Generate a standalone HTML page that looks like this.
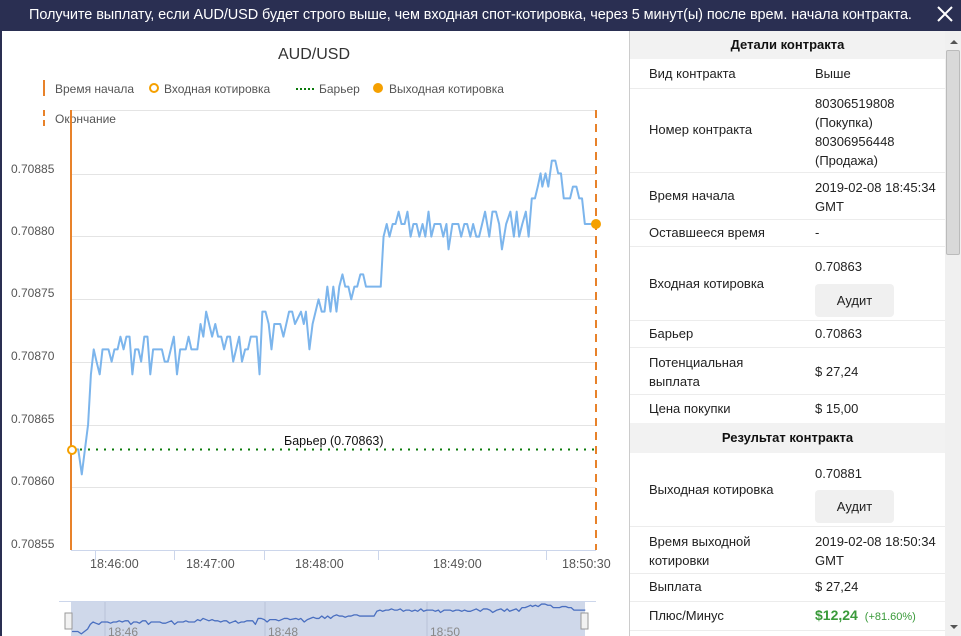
<!DOCTYPE html>
<html><head><meta charset="utf-8"><style>
*{margin:0;padding:0;box-sizing:border-box}
body{width:961px;height:636px;overflow:hidden;background:#fff;font-family:"Liberation Sans","Noto Sans CJK SC",sans-serif;position:relative}
.hdr{position:absolute;left:0;top:0;width:961px;height:31px;background:#2a2f52;color:#fff;font-size:14.5px;line-height:31px;padding-left:29px;letter-spacing:-0.1px}
.x{position:absolute;right:6px;top:4px}
.lb{position:absolute;left:0;top:31px;width:2px;height:605px;background:#2a2f52}
.t{position:absolute;font-size:13px;color:#222;white-space:nowrap}
.rp{position:absolute;left:629px;top:31px;width:316px;height:605px;border-left:1px solid #ccc}
.sep{position:absolute;left:630px;width:315px;height:1px;background:#ececec}
.sh{position:absolute;left:630px;width:315px;background:#f2f2f2;font-weight:bold;font-size:13px;text-align:center;color:#111}
.btn{position:absolute;left:815px;width:79px;height:33px;background:#f0f0f0;border-radius:4px;font-size:13px;text-align:center;line-height:33px;color:#222}
.sb{position:absolute;left:945px;top:31px;width:16px;height:605px;background:#f0f0f0}
.ax{position:absolute;font-size:12px;color:#555}
.lg{position:absolute;font-size:12px;color:#555;white-space:nowrap}
</style></head><body>
<div class="hdr">Получите выплату, если AUD/USD будет строго выше, чем входная спот-котировка, через 5 минут(ы) после врем. начала контракта.</div>
<svg class="x" width="20" height="20" viewBox="0 0 20 20"><path d="M3 3L17 17M17 3L3 17" stroke="#fff" stroke-width="2"/></svg>
<div class="lb"></div>

<div style="position:absolute;left:278px;top:46px;font-size:16px;color:#333">AUD/USD</div>
<div style="position:absolute;left:43px;top:80px;width:2px;height:16px;background:#e8822a"></div>
<div class="lg" style="left:55px;top:82px">Время начала</div>
<div style="position:absolute;left:149px;top:83px;width:10px;height:10px;border:2px solid #f5a000;border-radius:50%"></div>
<div class="lg" style="left:164px;top:82px">Входная котировка</div>
<div style="position:absolute;left:296px;top:88px;width:18px;border-top:2px dotted #0a7a0a"></div>
<div class="lg" style="left:319px;top:82px">Барьер</div>
<div style="position:absolute;left:373px;top:83px;width:10px;height:10px;background:#f5a000;border-radius:50%"></div>
<div class="lg" style="left:389px;top:82px">Выходная котировка</div>
<div style="position:absolute;left:43px;top:110px;height:16px;border-left:2px dashed #e8822a"></div>
<div class="lg" style="left:55px;top:112px">Окончание</div>

<div class="ax" style="left:11px;top:162px">0.70885</div>
<div class="ax" style="left:11px;top:224px">0.70880</div>
<div class="ax" style="left:11px;top:286px">0.70875</div>
<div class="ax" style="left:11px;top:349px">0.70870</div>
<div class="ax" style="left:11px;top:412px">0.70865</div>
<div class="ax" style="left:11px;top:474px">0.70860</div>
<div class="ax" style="left:11px;top:537px">0.70855</div>

<svg style="position:absolute;left:0;top:0" width="630" height="636">
<defs>
<polyline id="pl" vector-effect="non-scaling-stroke" stroke-linejoin="round" points="35,928 52,928 62,1003 80,853 88,703 96,628 104,665 113,703 121,628 138,628 147,665 155,628 164,628 172,590 181,628 189,590 198,590 206,703 214,628 223,628 231,665 240,590 249,590 257,703 265,628 290,628 298,665 307,665 324,590 333,703 342,628 358,628 366,590 374,628 391,628 400,552 408,590 416,515 433,590 442,552 450,590 459,590 467,628 476,590 484,590 493,665 510,590 518,665 527,628 535,628 543,590 560,590 568,703 576,515 585,515 594,552 602,628 610,552 627,552 636,590 652,515 661,515 669,552 686,515 694,552 700,515 710,628 719,552 736,478 745,515 753,515 761,440 770,515 778,440 787,515 795,440 804,403 812,440 821,440 829,478 838,440 846,440 855,403 863,403 871,440 913,440 921,290 930,252 938,290 947,252 955,252 964,215 972,252 981,252 989,215 998,290 1006,252 1015,252 1023,290 1032,252 1040,290 1049,215 1057,290 1066,252 1083,252 1091,290 1100,252 1106,328 1117,252 1134,252 1142,290 1151,252 1159,252 1168,290 1176,252 1185,290 1193,290 1210,215 1222,290 1231,215 1241,215 1250,252 1258,328 1270,252 1282,215 1292,290 1300,215 1307,290 1316,252 1326,215 1334,290 1343,175 1352,175 1360,140 1368,100 1373,140 1382,100 1390,140 1400,62 1410,62 1418,100 1426,100 1434,175 1452,175 1460,140 1470,140 1478,175 1486,175 1494,252 1527,252"/>
</defs>
<g stroke="#e4e4e4" stroke-width="1">
<line x1="71" y1="110.5" x2="596" y2="110.5"/>
<line x1="71" y1="174.5" x2="596" y2="174.5"/>
<line x1="71" y1="236.5" x2="596" y2="236.5"/>
<line x1="71" y1="299.5" x2="596" y2="299.5"/>
<line x1="71" y1="362.5" x2="596" y2="362.5"/>
<line x1="71" y1="425.5" x2="596" y2="425.5"/>
<line x1="71" y1="487.5" x2="596" y2="487.5"/>
</g>
<line x1="71" y1="550.5" x2="596" y2="550.5" stroke="#ccd6eb"/>
<g stroke="#ccd6eb"><line x1="95.5" y1="550" x2="95.5" y2="560"/><line x1="174.5" y1="550" x2="174.5" y2="560"/><line x1="264.5" y1="550" x2="264.5" y2="560"/><line x1="378.5" y1="550" x2="378.5" y2="560"/><line x1="546.5" y1="550" x2="546.5" y2="560"/></g>
<line x1="71" y1="110" x2="71" y2="550" stroke="#e8822a" stroke-width="2"/>
<line x1="596" y1="110" x2="596" y2="550" stroke="#e8822a" stroke-width="2" stroke-dasharray="8,6"/>
<line x1="72" y1="449.5" x2="596" y2="449.5" stroke="#0a7a0a" stroke-width="2" stroke-dasharray="2,6"/>
<g transform="translate(60,140) scale(0.3513,0.33333)" fill="none" stroke="#7cb5ec" stroke-width="2">
<use href="#pl"/>
</g>
<circle cx="72" cy="450" r="4" fill="#fff" stroke="#f5a000" stroke-width="2"/>
<circle cx="596" cy="224" r="5" fill="#f5a000"/>
<text x="284" y="445" font-size="12.5" fill="#111" font-family="Liberation Sans">Барьер (0.70863)</text>
<!-- navigator -->
<line x1="59" y1="601.5" x2="596" y2="601.5" stroke="#ccd6eb"/>
<rect x="71" y="602" width="514" height="34" fill="#cfd8ea"/>
<g stroke="#b8c2d8"><line x1="105" y1="602" x2="105" y2="636"/><line x1="265" y1="602" x2="265" y2="636"/><line x1="427" y1="602" x2="427" y2="636"/></g>
<text x="108" y="636" font-size="12" fill="#888">18:46</text>
<text x="268" y="636" font-size="12" fill="#888">18:48</text>
<text x="430" y="636" font-size="12" fill="#888">18:50</text>
<g transform="translate(60,602.1) scale(0.344,0.0317)" fill="none" stroke="#4a6fc0" stroke-width="1.3">
<use href="#pl"/>
</g>
<rect x="65" y="613" width="7" height="16" fill="#f2f2f2" stroke="#999"/>
<rect x="581" y="613" width="7" height="16" fill="#f2f2f2" stroke="#999"/>
</svg>
<div class="ax" style="left:90px;top:557px;font-size:12.5px">18:46:00</div>
<div class="ax" style="left:186px;top:557px;font-size:12.5px">18:47:00</div>
<div class="ax" style="left:295px;top:557px;font-size:12.5px">18:48:00</div>
<div class="ax" style="left:433px;top:557px;font-size:12.5px">18:49:00</div>
<div class="ax" style="left:562px;top:557px;font-size:12.5px">18:50:30</div>

<div class="rp"></div>
<div class="sh" style="top:31px;height:28px;line-height:28px">Детали контракта</div>
<div class="sep" style="top:88px"></div>
<div class="sep" style="top:172px"></div>
<div class="sep" style="top:219px"></div>
<div class="sep" style="top:246px"></div>
<div class="sep" style="top:320px"></div>
<div class="sep" style="top:347px"></div>
<div class="sep" style="top:394px"></div>
<div class="sh" style="top:423px;height:30px;line-height:30px">Результат контракта</div>
<div class="sep" style="top:526px"></div>
<div class="sep" style="top:573px"></div>
<div class="sep" style="top:601px"></div>
<div class="sep" style="top:630px"></div>

<div class="t" style="left:649px;top:66px">Вид контракта</div><div class="t" style="left:815px;top:66px">Выше</div>
<div class="t" style="left:649px;top:122px">Номер контракта</div>
<div class="t" style="left:815px;top:94px;line-height:19px">80306519808<br>(Покупка)<br>80306956448<br>(Продажа)</div>
<div class="t" style="left:649px;top:188px">Время начала</div>
<div class="t" style="left:815px;top:178px;line-height:19px">2019-02-08 18:45:34<br>GMT</div>
<div class="t" style="left:649px;top:225px">Оставшееся время</div><div class="t" style="left:815px;top:225px">-</div>
<div class="t" style="left:649px;top:276px">Входная котировка</div><div class="t" style="left:815px;top:259px">0.70863</div>
<div class="btn" style="top:284px">Аудит</div>
<div class="t" style="left:649px;top:326px">Барьер</div><div class="t" style="left:815px;top:326px">0.70863</div>
<div class="t" style="left:649px;top:353px;line-height:19px">Потенциальная<br>выплата</div><div class="t" style="left:815px;top:364px">$ 27,24</div>
<div class="t" style="left:649px;top:401px">Цена покупки</div><div class="t" style="left:815px;top:401px">$ 15,00</div>
<div class="t" style="left:649px;top:482px">Выходная котировка</div><div class="t" style="left:815px;top:466px">0.70881</div>
<div class="btn" style="top:490px">Аудит</div>
<div class="t" style="left:649px;top:532px;line-height:19px">Время выходной<br>котировки</div>
<div class="t" style="left:815px;top:532px;line-height:19px">2019-02-08 18:50:34<br>GMT</div>
<div class="t" style="left:649px;top:579px">Выплата</div><div class="t" style="left:815px;top:579px">$ 27,24</div>
<div class="t" style="left:649px;top:608px">Плюс/Минус</div>
<div class="t" style="left:815px;top:607px;color:#3a9a3a;font-weight:bold;font-size:14px">$12,24 <span style="font-weight:normal;font-size:11px">&nbsp;(+81.60%)</span></div>

<div class="sb"></div>
<div style="position:absolute;left:950px;top:40px;width:0;height:0;border-left:4px solid transparent;border-right:4px solid transparent;border-bottom:4px solid #555"></div>
<div style="position:absolute;left:946px;top:50px;width:14px;height:205px;background:#d9d9d9;border:1px solid #bbb;border-radius:2px"></div>
<div style="position:absolute;left:950px;top:625px;width:0;height:0;border-left:4px solid transparent;border-right:4px solid transparent;border-top:4px solid #555"></div>
</body></html>
